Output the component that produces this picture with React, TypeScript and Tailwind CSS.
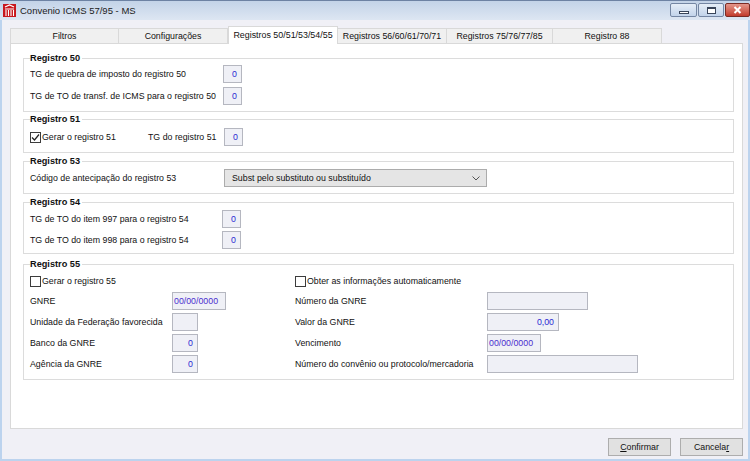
import React from "react";

const tabs = [
  { label: "Filtros", w: "w-[109px]" },
  { label: "Configurações", w: "w-[109px]" },
  { label: "Registros 50/51/53/54/55", w: "w-[110px]", active: true },
  { label: "Registros 56/60/61/70/71", w: "w-[109px]" },
  { label: "Registros 75/76/77/85", w: "w-[106px]" },
  { label: "Registro 88", w: "w-[109px]" },
];

function Field({ className, value }: { className: string; value?: string }) {
  return (
    <div
      className={`h-[18px] border border-[#b5b7c0] bg-[#eff0f6] flex items-center text-[#2a2ad2] ${className}`}
    >
      {value}
    </div>
  );
}

function Check({ checked }: { checked?: boolean }) {
  return (
    <div className="w-[11px] h-[11px] border border-[#3c3c3c] bg-white flex items-center justify-center mr-[1px]">
      {checked && (
        <svg width="9" height="9" viewBox="0 0 9 9">
          <path d="M1 4.5 L3.5 7 L8 1.5" fill="none" stroke="#222" strokeWidth="1.2" />
        </svg>
      )}
    </div>
  );
}

function Group({
  title,
  className,
  children,
}: {
  title: string;
  className: string;
  children: React.ReactNode;
}) {
  return (
    <fieldset className={`border border-[#dcdcdc] pl-[6px] pr-[6px] ${className}`}>
      <legend className="pr-[2px] font-bold text-[9.2px] leading-[11px] text-[#111]">
        {title}
      </legend>
      {children}
    </fieldset>
  );
}

export default function App() {
  return (
    <div className="w-[750px] h-[461px] overflow-hidden flex flex-col bg-[#f0f0f6] font-['Liberation_Sans',Arial,sans-serif] text-[8.8px] leading-[11px] text-[#111]">
      {/* title bar */}
      <div className="h-[20px] shrink-0 flex items-center border-t border-[#6d82a3] bg-gradient-to-b from-[#c3d3e8] to-[#dde6f2]">
        <svg width="13" height="13" viewBox="0 0 13 13" className="ml-[3px]">
          <rect width="13" height="13" fill="#c8161d" />
          <path d="M2 3 L6.5 1 L11 3 M2 5 H11" stroke="#fff" strokeWidth="1.2" fill="none" />
          <path d="M3 6 V12 M5.5 6 V12 M8 6 V12 M10.5 6 V12" stroke="#fff" strokeWidth="1.1" />
        </svg>
        <span className="ml-[4px] text-[9.5px] text-[#1b1b1b]">Convenio ICMS 57/95 - MS</span>
        <div className="ml-auto flex items-start h-full pt-[2px] gap-[1px]">
          <div className="w-[27px] h-[14px] rounded-[2px] border border-[#7486a3] bg-gradient-to-b from-[#e6eef8] to-[#c2d3ea] flex items-center justify-center">
            <div className="w-[10px] h-[3px] border border-[#39455a] bg-white mt-[5px]" />
          </div>
          <div className="w-[26px] h-[14px] rounded-[2px] border border-[#7486a3] bg-gradient-to-b from-[#e6eef8] to-[#c2d3ea] flex items-center justify-center">
            <div className="w-[9px] h-[7px] border border-[#39455a] border-t-2 bg-white" />
          </div>
          <div className="w-[25px] h-[14px] rounded-[2px] border border-[#7a2b24] bg-gradient-to-b from-[#e3958a] to-[#c23a2c] flex items-center justify-center">
            <svg width="9" height="8" viewBox="0 0 9 8">
              <path d="M1.5 1 L7.5 7 M7.5 1 L1.5 7" stroke="#fff" strokeWidth="2" />
            </svg>
          </div>
        </div>
      </div>

      {/* body */}
      <div className="flex-1 flex flex-col border-l-2 border-r-2 border-b-2 border-[#bcd3ee] pl-[8px] pr-[5px]">
        {/* tabs */}
        <div className="mt-[6px] h-[17px] flex items-end">
          {tabs.map((t) =>
            t.active ? (
              <div
                key={t.label}
                className={`${t.w} h-[18px] -mb-px relative z-10 bg-white border border-b-0 border-[#d9d9d9] flex items-center justify-center text-[8.9px] pb-[1px]`}
              >
                {t.label}
              </div>
            ) : (
              <div
                key={t.label}
                className={`${t.w} h-[15px] bg-[#f0f0f0] border border-b-0 border-l-0 first:border-l border-[#d9d9d9] flex items-center justify-center`}
              >
                {t.label}
              </div>
            )
          )}
        </div>

        {/* panel */}
        <div className="w-[733px] h-[386px] bg-white border border-[#d9d9d9] pt-[9px] pl-[12px] pr-[8px] flex flex-col">
          <Group title="Registro 50" className="pb-[6px]">
            <div className="mt-[1px] flex flex-col gap-[4px]">
              <div className="flex items-center h-[18px]">
                <div className="w-[193px]">TG de quebra de imposto do registro 50</div>
                <Field className="w-[19px] justify-end pr-[4px]" value="0" />
              </div>
              <div className="flex items-center h-[18px]">
                <div className="w-[193px]">TG de TO de transf. de ICMS para o registro 50</div>
                <Field className="w-[19px] justify-end pr-[4px]" value="0" />
              </div>
            </div>
          </Group>

          <Group title="Registro 51" className="mt-[2px] pb-[6px]">
            <div className="mt-[3px] flex items-center h-[18px]">
              <Check checked />
              <div className="w-[106px]">Gerar o registro 51</div>
              <div className="w-[76px]">TG do registro 51</div>
              <Field className="w-[19px] justify-end pr-[4px]" value="0" />
            </div>
          </Group>

          <Group title="Registro 53" className="mt-[3px] pb-[6px]">
            <div className="mt-[2px] flex items-center h-[18px]">
              <div className="w-[194px]">Código de antecipação do registro 53</div>
              <div className="w-[263px] h-[18px] border border-[#acacac] bg-[#e5e5e5] flex items-center pl-[7px] pr-[6px]">
                <span>Subst pelo substituto ou substituído</span>
                <svg width="8" height="5" viewBox="0 0 8 5" className="ml-auto">
                  <path d="M0.5 0.5 L4 4 L7.5 0.5" fill="none" stroke="#555" strokeWidth="1" />
                </svg>
              </div>
            </div>
          </Group>

          <Group title="Registro 54" className="mt-[3px] pb-[4px]">
            <div className="mt-[2px] flex flex-col gap-[3px]">
              <div className="flex items-center h-[18px]">
                <div className="w-[192px]">TG de TO do item 997 para o registro 54</div>
                <Field className="w-[19px] justify-end pr-[4px]" value="0" />
              </div>
              <div className="flex items-center h-[18px]">
                <div className="w-[192px]">TG de TO do item 998 para o registro 54</div>
                <Field className="w-[19px] justify-end pr-[4px]" value="0" />
              </div>
            </div>
          </Group>

          <Group title="Registro 55" className="mt-[5px] pb-[6px]">
            <div className="mt-[4px] flex">
              <div className="w-[265px] flex flex-col gap-[3px]">
                <div className="flex items-center h-[14px] mb-[1px]">
                  <Check />
                  <span>Gerar o registro 55</span>
                </div>
                <div className="flex items-center h-[18px]">
                  <div className="w-[142px]">GNRE</div>
                  <Field className="w-[54px] justify-start pl-[1px] text-[#4a2fcf]" value="00/00/0000" />
                </div>
                <div className="flex items-center h-[18px]">
                  <div className="w-[142px]">Unidade da Federação favorecida</div>
                  <Field className="w-[26px]" />
                </div>
                <div className="flex items-center h-[18px]">
                  <div className="w-[142px]">Banco da GNRE</div>
                  <Field className="w-[26px] justify-end pr-[4px]" value="0" />
                </div>
                <div className="flex items-center h-[18px]">
                  <div className="w-[142px]">Agência da GNRE</div>
                  <Field className="w-[26px] justify-end pr-[4px]" value="0" />
                </div>
              </div>
              <div className="flex flex-col gap-[3px]">
                <div className="flex items-center h-[14px] mb-[1px]">
                  <Check />
                  <span>Obter as informações automaticamente</span>
                </div>
                <div className="flex items-center h-[18px]">
                  <div className="w-[192px]">Número da GNRE</div>
                  <Field className="w-[101px]" />
                </div>
                <div className="flex items-center h-[18px]">
                  <div className="w-[192px]">Valor da GNRE</div>
                  <Field className="w-[72px] justify-end pr-[4px]" value="0,00" />
                </div>
                <div className="flex items-center h-[18px]">
                  <div className="w-[192px]">Vencimento</div>
                  <Field className="w-[54px] justify-start pl-[1px] text-[#4a2fcf]" value="00/00/0000" />
                </div>
                <div className="flex items-center h-[18px]">
                  <div className="w-[192px]">Número do convênio ou protocolo/mercadoria</div>
                  <Field className="w-[151px]" />
                </div>
              </div>
            </div>
          </Group>
        </div>

        {/* buttons */}
        <div className="mt-[9px] w-[733px] flex justify-end gap-[9px]">
          <button className="w-[63px] h-[18px] bg-[#e1e1e1] border border-[#adadad] text-[8.8px] leading-[11px]">
            <span className="underline">C</span>onfirmar
          </button>
          <button className="w-[63px] h-[18px] bg-[#e1e1e1] border border-[#adadad] text-[8.8px] leading-[11px]">
            Cancela<span className="underline">r</span>
          </button>
        </div>
      </div>
    </div>
  );
}
